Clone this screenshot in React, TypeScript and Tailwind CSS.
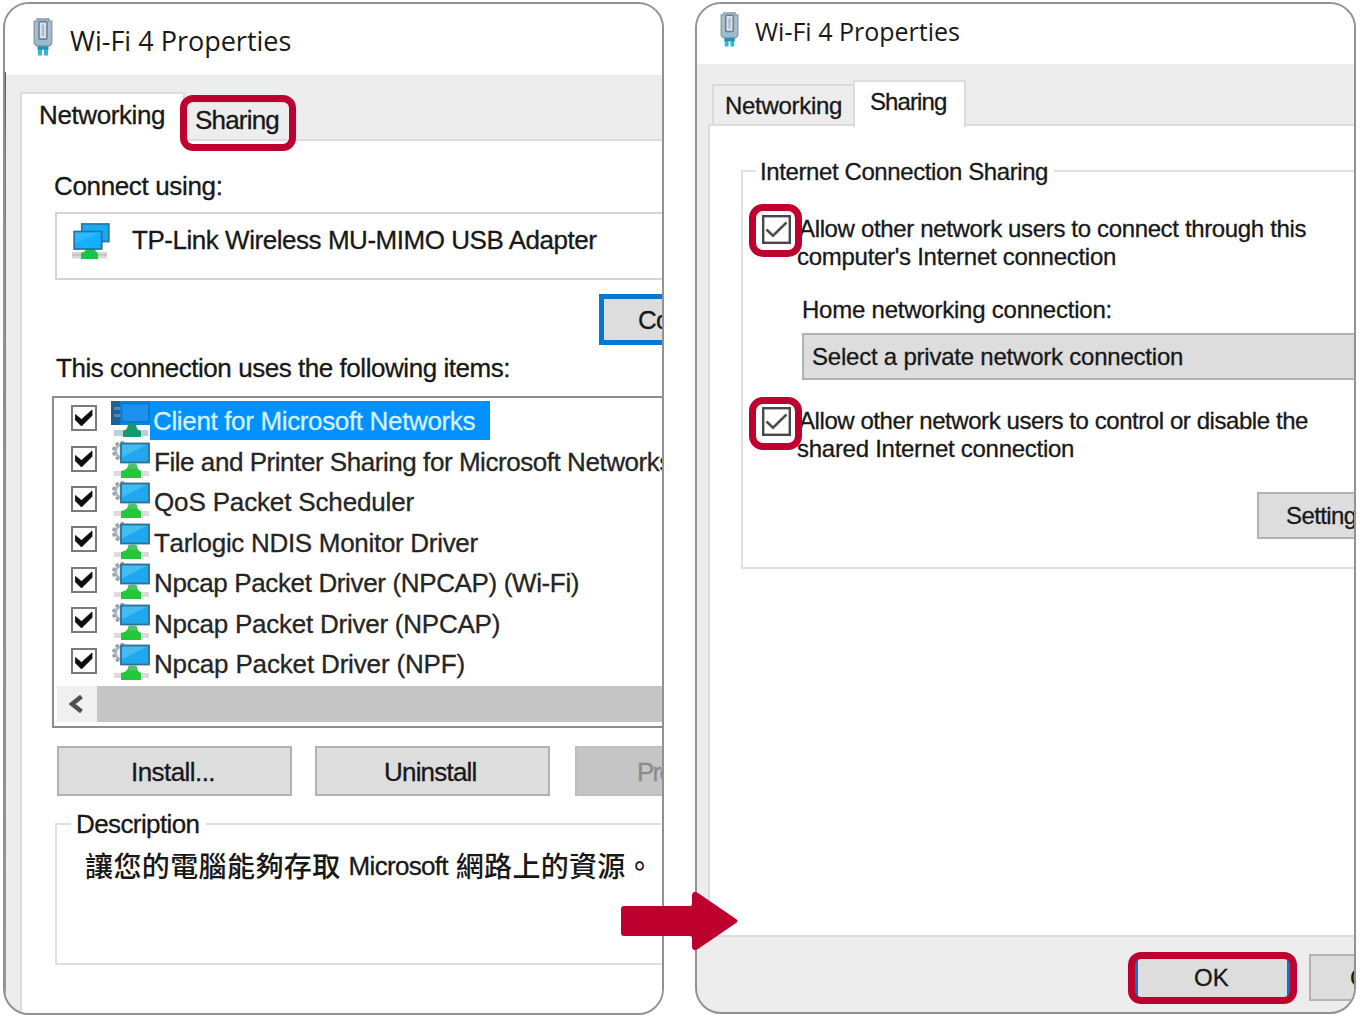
import type { ReactNode } from "react";

const items = [
  { label: "Client for Microsoft Networks", className: "tracking-[-0.35px]", selected: true },
  { label: "File and Printer Sharing for Microsoft Networks", className: "tracking-[-0.45px]" },
  { label: "QoS Packet Scheduler", className: "tracking-[-0.15px]" },
  { label: "Tarlogic NDIS Monitor Driver", className: "tracking-[-0.3px]" },
  { label: "Npcap Packet Driver (NPCAP) (Wi-Fi)", className: "tracking-[-0.36px]" },
  { label: "Npcap Packet Driver (NPCAP)", className: "tracking-[-0.24px]" },
  { label: "Npcap Packet Driver (NPF)", className: "tracking-[-0.16px]" },
];

function PlugIcon({ className }: { className: string }) {
  return (
    <svg viewBox="0 0 20 37" preserveAspectRatio="none" className={className}>
      <path d="M5 27h4v9.500H5zM11 27h4v9.500h-4z" fill="#35b6d2" />
      <path d="M4.500 26h11v5h-11z" fill="#1794b3" />
      <path d="M4 1h12v2h2.800v21.500L16.800 27H3.200l-2-2.500V3H4z" fill="#a9bccc" stroke="#8599ac" strokeWidth="1.300" />
      <path d="M3 21h14v3l-1.500 2h-11L3 24z" fill="#92bdd2" />
      <rect x="6" y="3.500" width="8" height="17" rx="1" fill="#d9dfea" stroke="#6c8094" strokeWidth="1.600" />
      <path d="M10 6.500v11" stroke="#a9b5c8" strokeWidth="2.200" />
    </svg>
  );
}

function AdapterIcon() {
  return (
    <svg viewBox="0 0 38 37" className="h-[37px] w-[38px]">
      <rect x="9.800" y="1" width="27" height="17.500" fill="#13aaf8" stroke="#2d78a4" strokeWidth="1.800" />
      <path d="M0 29h35v6.500H0z" fill="#d8d8d8" />
      <path d="M0 32h35" stroke="#b5b5b5" />
      <path d="M14 25h9c0 3 1 4 3 5v6H9v-6c3-1 5-2 5-5z" fill="#16c44c" />
      <rect x="2.200" y="8.500" width="27.500" height="17.500" fill="#13b0ff" stroke="#2872a0" strokeWidth="1.800" />
      <path d="M3 9.400h25L3 20z" fill="#55c8ff" opacity=".4" />
    </svg>
  );
}

function ServiceIcon() {
  return (
    <svg viewBox="0 0 39 38" className="h-[38px] w-[39px]">
      <circle cx="11" cy="10" r="8.500" fill="#e9ecef" stroke="#929da6" strokeWidth="3" strokeDasharray="3.300 2.200" />
      <circle cx="11" cy="10" r="6.500" fill="none" stroke="#a9b3bb" strokeWidth="2.500" />
      <path d="M3 30h35v5H3z" fill="#dfd8df" />
      <path d="M17 24h9c0 3 1 5 4 6v7H10v-7c5-1 7-3 7-6z" fill="#22c73a" />
      <path d="M17.500 22.500h8v5h-8z" fill="#4fc272" />
      <rect x="10" y="2.500" width="28" height="19" fill="#20a8ef" stroke="#306f94" strokeWidth="1.800" />
      <path d="M11 3.500h25L11 16.500z" fill="#65cdf8" opacity=".5" />
    </svg>
  );
}

function ClientIcon() {
  return (
    <svg viewBox="0 0 39 38" className="h-[38px] w-[39px]">
      <path d="M0 0h39v24H0z" fill="#0585e8" />
      <path d="M0 0h9v24H0z" fill="#235f91" />
      <path d="M3 6h7v3H3zM3 13h7v3H3z" fill="#4d8dbc" />
      <path d="M9 24h30v5H9z" fill="#fff" />
      <path d="M3 29h34v6H3z" fill="#bad2d5" />
      <path d="M17 22h8c0 4 1 7 5 8v6H12v-6c4-1 5-4 5-8z" fill="#16996f" />
      <rect x="10.500" y="2.500" width="27.500" height="18.500" fill="#1a91ee" stroke="#1374bc" strokeWidth="1.600" />
    </svg>
  );
}

function ListCheckbox() {
  return (
    <svg viewBox="0 0 26 26" className="h-[26px] w-[26px]">
      <rect x="1" y="1" width="24" height="24" fill="#fff" stroke="#7b7b7b" strokeWidth="2" />
      <path d="M4.500 9.500l6 5L21 5v5.500L10.500 21l-6-6z" fill="#0c0c0c" stroke="#0c0c0c" strokeWidth="0.800" />
    </svg>
  );
}

function Checkbox() {
  return (
    <svg viewBox="0 0 29 29" className="h-[29px] w-[29px] shrink-0">
      <rect x="1.200" y="1.200" width="26.600" height="26.600" fill="#fff" stroke="#484848" strokeWidth="2.400" />
      <path d="M4.500 14.500l6.500 6.200L24.500 7.500" fill="none" stroke="#4c4c4c" strokeWidth="2.500" />
    </svg>
  );
}

function Highlight({ className }: { className: string }) {
  return <div className={`absolute z-10 border-[7px] border-[#be002f] ${className}`} />;
}

function Card({ children }: { children: ReactNode }) {
  return (
    <section className="relative w-[661px] shrink-0 overflow-hidden rounded-[26px] border-2 border-[#929292] bg-[#ededed] whitespace-nowrap [-webkit-text-stroke:0.3px]">
      {children}
    </section>
  );
}

function NetworkingDialog() {
  return (
    <div className="flex h-[1009px] w-[760px] flex-col text-[26px] leading-[30px]">
      <header className="flex h-[71px] shrink-0 bg-white">
        <PlugIcon className="mt-[14px] ml-[28px] h-[38px] w-[20px]" />
        <h1 className="mt-[19px] ml-[17px] font-['Open_Sans',sans-serif] text-[27px] leading-[36px] [-webkit-text-stroke:0px]">Wi-Fi 4 Properties</h1>
      </header>

      <div className="ml-[15px] flex h-[66px] shrink-0 items-end">
        <div className="z-[1] -mb-[2px] h-[51px] w-[165px] border-2 border-b-0 border-[#dcdcdc] bg-white pt-[6px] pl-[17px] tracking-[-0.4px]">
          Networking
        </div>
        <div className="h-[40px] w-[106px] border-t-2 border-r-2 border-[#dcdcdc] pt-[2px] pl-[10px] tracking-[-0.8px]">
          Sharing
        </div>
      </div>

      <div className="-mt-[2px] ml-[15px] flex flex-1 flex-col border-t-2 border-l-2 border-[#dcdcdc] bg-white">
        <p className="mt-[30px] ml-[32px] tracking-[-0.35px]">Connect using:</p>
        <div className="mt-[11px] ml-[33px] flex h-[68px] shrink-0 border-2 border-[#d3d3d3]">
          <div className="mt-[9px] ml-[15px]"><AdapterIcon /></div>
          <span className="mt-[11px] ml-[22px] tracking-[-0.46px]">TP-Link Wireless MU-MIMO USB Adapter</span>
        </div>
        <div className="mt-[14px] ml-[577px] h-[51px] w-[235px] shrink-0 border-[5px] border-[#0078d7] bg-[#ddd] pt-[6px] pl-[34px] tracking-[-0.8px]">
          Configure...
        </div>
        <p className="mt-[8px] ml-[34px] tracking-[-0.45px]">This connection uses the following items:</p>

        <div className="mt-[13px] ml-[30px] h-[332px] shrink-0 border-2 border-[#8c8c91] pt-[2px]">
          {items.map((item) => (
            <div key={item.label} className="flex h-[40.4px] items-center">
              <div className="mb-[4px] ml-[17px] shrink-0"><ListCheckbox /></div>
              <div className="mb-px ml-[14px] shrink-0">{item.selected ? <ClientIcon /> : <ServiceIcon />}</div>
              <span
                className={
                  item.selected
                    ? `h-[39px] w-[340px] pt-[5px] pl-[3px] bg-[#0091ff] text-[#d5f1ff] ${item.className}`
                    : `pt-[3px] pl-[4px] text-[#252525] [font-kerning:none] ${item.className}`
                }
              >
                {item.label}
              </span>
            </div>
          ))}
          <div className="mt-[3px] ml-[3px] flex h-[36px]">
            <div className="flex w-[40px] items-center justify-center bg-[#f0f0f0]">
              <svg viewBox="0 0 14 18" className="mr-[2px] h-[18px] w-[14px]">
                <path d="M12.500 1.500L3 9l9.500 7.500" fill="none" stroke="#505050" strokeWidth="4.500" />
              </svg>
            </div>
            <div className="flex-1 bg-[#c5c5c5]" />
          </div>
        </div>

        <div className="mt-[18px] ml-[35px] flex shrink-0">
          <div className="h-[50px] w-[235px] shrink-0 border-2 border-[#b2b2b2] bg-[#ddd] pt-[9px] pl-[72px] tracking-[-0.56px]">Install...</div>
          <div className="ml-[23px] h-[50px] w-[235px] shrink-0 border-2 border-[#b2b2b2] bg-[#ddd] pt-[9px] pl-[67px] tracking-[-0.8px]">Uninstall</div>
          <div className="ml-[25px] h-[50px] w-[235px] shrink-0 border-2 border-[#bdbdbd] bg-[#c5c5c5] pt-[9px] pl-[60px] tracking-[-1.8px] text-[#8b8b8b]">Properties</div>
        </div>

        <div className="mt-[27px] ml-[33px] h-[142px] shrink-0 border-2 border-[#e0e0e0]">
          <p className="-mt-[16px] ml-[14px] w-[135px] bg-white pl-[5px] tracking-[-0.6px]">Description</p>
          <p className="mt-[9px] ml-[28px] flex leading-[36px]">
            <span className="-mt-px font-['Noto_Sans_CJK_TC',sans-serif] text-[28px] font-medium tracking-[0.4px] [-webkit-text-stroke:0px]">讓您的電腦能夠存取</span>
            <span className="ml-[8px] tracking-[-0.7px]">Microsoft</span>
            <span className="-mt-px ml-[8px] font-['Noto_Sans_CJK_TC',sans-serif] text-[28px] font-medium tracking-[0.3px] [-webkit-text-stroke:0px]">網路上的資源。</span>
          </p>
        </div>
      </div>
      <div className="absolute top-[68px] left-0 h-[941px] w-px bg-linear-to-b from-[#345f9e] via-[#777c88] via-10% to-[#999]" />
    </div>
  );
}

function SharingDialog() {
  return (
    <div className="flex h-[1008px] w-[760px] flex-col text-[24px] leading-[28px]">
      <header className="flex h-[60px] shrink-0 bg-white">
        <PlugIcon className="mt-[8px] ml-[23px] h-[35px] w-[19px]" />
        <h1 className="mt-[10px] ml-[16px] font-['Open_Sans',sans-serif] text-[25px] leading-[34px] [-webkit-text-stroke:0px]">Wi-Fi 4 Properties</h1>
      </header>

      <div className="ml-[15px] flex h-[61px] shrink-0 items-end">
        <div className="h-[41px] w-[141px] border-2 border-r-0 border-b-0 border-[#dadada] pt-[6px] pl-[11px] tracking-[-0.3px]">
          Networking
        </div>
        <div className="z-[1] -mb-[2px] h-[47px] w-[113px] border-2 border-b-0 border-[#dcdcdc] bg-white pt-[6px] pl-[15px] tracking-[-0.9px]">
          Sharing
        </div>
      </div>

      <div className="-mt-px ml-[11px] h-[813px] shrink-0 border-2 border-[#dcdcdc] bg-white">
        <div className="mt-[44px] ml-[31px] h-[399px] border-2 border-[#e0e0e0]">
          <p className="-mt-[14px] ml-[13px] w-[298px] bg-white pl-[4px] tracking-[-0.4px]">Internet Connection Sharing</p>
          <div className="mt-[29px] ml-[19px] flex">
            <Checkbox />
            <p className="ml-[6px]">
              <span className="block pl-[2px] tracking-[-0.35px]">Allow other network users to connect through this</span>
              <span className="block tracking-[-0.28px]">computer's Internet connection</span>
            </p>
          </div>
          <p className="mt-[25px] ml-[59px] tracking-[-0.23px]">Home networking connection:</p>
          <div className="mt-[9px] ml-[59px] h-[47px] border-2 border-[#b2b2b2] bg-[#ddd] pt-[8px] pl-[8px] tracking-[-0.22px]">
            Select a private network connection
          </div>
          <div className="mt-[27px] ml-[19px] flex">
            <Checkbox />
            <p className="ml-[6px]">
              <span className="block pl-[2px] tracking-[-0.43px]">Allow other network users to control or disable the</span>
              <span className="block tracking-[-0.27px]">shared Internet connection</span>
            </p>
          </div>
          <div className="mt-[29px] ml-[514px] h-[47px] w-[180px] border-2 border-[#b2b2b2] bg-[#ddd] pt-[8px] pl-[27px] tracking-[-0.6px]">
            Settings
          </div>
        </div>
      </div>

      <div className="mt-[17px] ml-[437px] flex gap-[18px]">
        <div className="h-[47px] w-[157px] shrink-0 border-4 border-[#0078d7] bg-[#ddd] pt-[6px] pl-[56px]">OK</div>
        <div className="h-[47px] w-[159px] shrink-0 border-2 border-[#b2b2b2] bg-[#ddd] pt-[8px] pl-[39px]">Cancel</div>
      </div>
    </div>
  );
}

export default function App() {
  return (
    <main className="relative flex h-[1017px] w-[1360px] items-start gap-[31px] overflow-hidden bg-white pt-[2px] pl-[3px] font-['Liberation_Sans','Noto_Sans_CJK_TC',sans-serif] text-[#181818]">
      <Card><NetworkingDialog /></Card>
      <Card><SharingDialog /></Card>

      <Highlight className="top-[95px] left-[180px] h-[56px] w-[116px] rounded-[13px]" />
      <Highlight className="top-[204px] left-[749px] h-[53px] w-[53px] rounded-[14px]" />
      <Highlight className="top-[397px] left-[749px] h-[53px] w-[53px] rounded-[14px]" />
      <Highlight className="top-[952px] left-[1128px] h-[52px] w-[169px] rounded-[13px]" />
      <svg viewBox="0 0 117 58" className="absolute top-[892px] left-[621px] z-10 h-[58px] w-[117px]">
        <path
          d="M3 14h66q2 0 2-2V4q0-6 6-3l38 26q3 2 0 4L77 57q-6 3-6-3v-8q0-2-2-2H3q-3 0-3-3V17q0-3 3-3z"
          fill="#be002f"
        />
      </svg>
    </main>
  );
}
